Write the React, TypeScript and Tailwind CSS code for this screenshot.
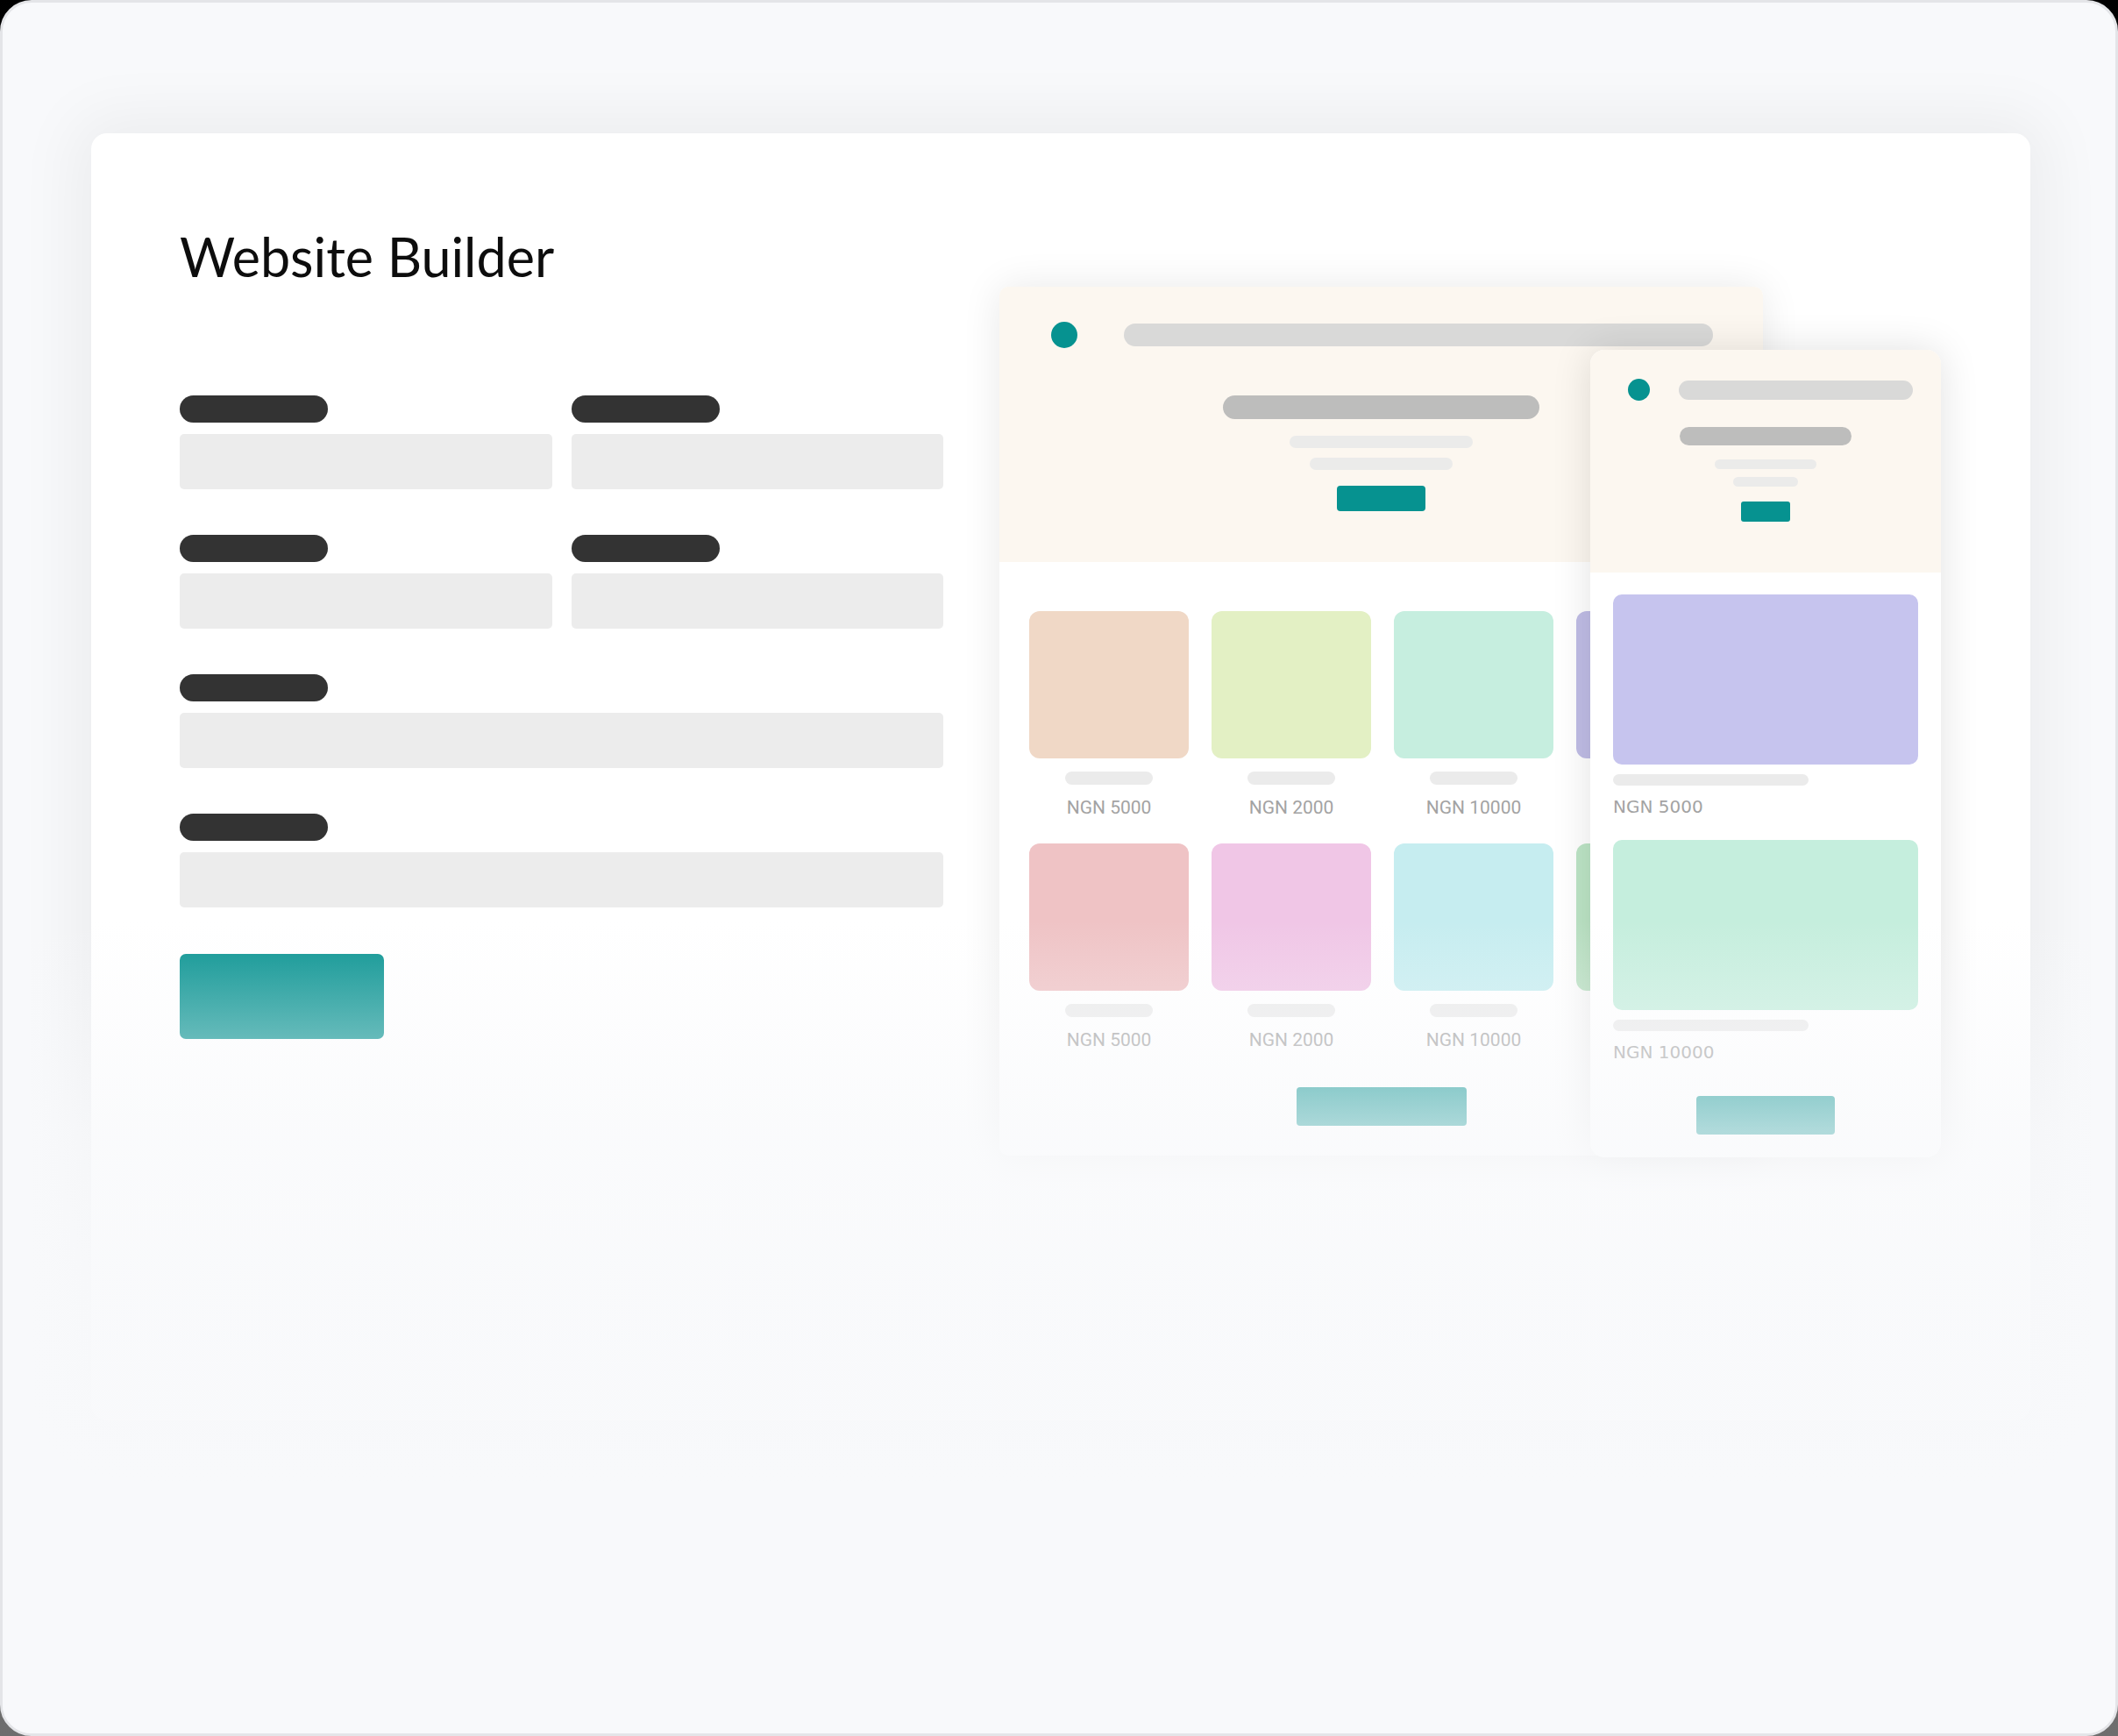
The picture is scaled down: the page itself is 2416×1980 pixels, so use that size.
const deskRow1 = [
  { c: "bg-[#f0d8c6]", p: "NGN 5000" },
  { c: "bg-[#e3f0c4]", p: "NGN 2000" },
  { c: "bg-[#c6eedf]", p: "NGN 10000" },
  { c: "bg-[#c0bde6]", p: "" },
];
const deskRow2 = [
  { c: "bg-[#efc3c5]", p: "NGN 5000" },
  { c: "bg-[#f0c6e6]", p: "NGN 2000" },
  { c: "bg-[#c6edf0]", p: "NGN 10000" },
  { c: "bg-[#bde5c6]", p: "" },
];

function DeskItem({ c, p }: { c: string; p: string }) {
  return (
    <div className="flex flex-col items-center">
      <div className={`w-[182px] h-[168px] rounded-[12px] ${c}`} />
      <div className="mt-[15px] w-[100px] h-[15px] rounded-full bg-[#ebebeb]" />
      <div className="mt-[14px] h-[24px] leading-[24px] text-[21px] text-[#a3a3a3] font-['Roboto',sans-serif] whitespace-nowrap">
        {p}
      </div>
    </div>
  );
}

function FormField() {
  return (
    <div className="flex flex-col">
      <div className="w-[169px] h-[31px] rounded-full bg-[#333333]" />
      <div className="mt-[13px] h-[63px] rounded-[5px] bg-[#ececec]" />
    </div>
  );
}

export default function App() {
  return (
    <div className="w-[2416px] h-[1980px] bg-[linear-gradient(to_bottom,#000000,#6e6e6e)]">
      <div className="relative w-full h-full rounded-[36px] border-[3px] border-[#e4e5e8] bg-[#f8f9fb] overflow-hidden pl-[101px] pr-[97px] pt-[149px]">
        {/* white card */}
        <div className="flex h-[1468px] rounded-[18px] bg-white shadow-[0_0_70px_20px_rgba(0,0,0,0.05)] pl-[101px] pt-[111px]">
          {/* left form */}
          <div className="w-[871px] flex flex-col">
            <h1 className="h-[60px] leading-[60px] text-[61px] font-normal text-[#0d0d0d] font-['Lato',sans-serif] whitespace-nowrap">
              Website Builder
            </h1>
            <div className="mt-[128px] grid grid-cols-2 gap-x-[22px] gap-y-[52px]">
              <FormField />
              <FormField />
              <FormField />
              <FormField />
              <div className="col-span-2">
                <FormField />
              </div>
              <div className="col-span-2">
                <FormField />
              </div>
            </div>
            <div className="mt-[53px] w-[233px] h-[97px] rounded-[7px] bg-[#069290]" />
          </div>

          {/* right mockups */}
          <div className="relative ml-[64px] mt-[64px] w-[1074px] self-start">
            {/* desktop mock */}
            <div className="w-[871px] h-[991px] rounded-[10px] bg-white overflow-hidden shadow-[0_0_45px_rgba(0,0,0,0.09)]">
              <div className="h-[314px] bg-[#fcf7f0] pt-[40px]">
                <div className="flex items-center pl-[59px] pr-[57px]">
                  <div className="w-[30px] h-[30px] rounded-full bg-[#069290]" />
                  <div className="ml-[53px] flex-1 h-[26px] rounded-full bg-[#d9d9d8]" />
                </div>
                <div className="flex flex-col items-center">
                  <div className="mt-[54px] w-[361px] h-[27px] rounded-full bg-[#bdbdbc]" />
                  <div className="mt-[19px] w-[209px] h-[14px] rounded-full bg-[#ebebea]" />
                  <div className="mt-[11px] w-[163px] h-[14px] rounded-full bg-[#ebebea]" />
                  <div className="mt-[18px] w-[101px] h-[29px] rounded-[4px] bg-[#069290]" />
                </div>
              </div>
              <div className="grid grid-cols-[repeat(4,182px)] gap-x-[26px] gap-y-[29px] pl-[34px] pt-[56px]">
                {deskRow1.map((it, i) => (
                  <DeskItem key={`a${i}`} c={it.c} p={it.p} />
                ))}
                {deskRow2.map((it, i) => (
                  <DeskItem key={`b${i}`} c={it.c} p={it.p} />
                ))}
              </div>
              <div className="mt-[42px] mx-auto w-[194px] h-[44px] rounded-[4px] bg-[#069290]" />
            </div>

            {/* mobile mock */}
            <div className="absolute left-[674px] top-[72px] w-[400px] h-[921px] rounded-[16px] bg-white overflow-hidden shadow-[0_0_45px_rgba(0,0,0,0.12)]">
              <div className="h-[254px] bg-[#fcf7f0] pt-[33px]">
                <div className="flex items-center pl-[43px] pr-[32px]">
                  <div className="w-[25px] h-[25px] rounded-full bg-[#069290]" />
                  <div className="ml-[33px] flex-1 h-[22px] rounded-full bg-[#d9d9d8]" />
                </div>
                <div className="flex flex-col items-center">
                  <div className="mt-[30px] w-[196px] h-[21px] rounded-full bg-[#bdbdbc]" />
                  <div className="mt-[16px] w-[116px] h-[11px] rounded-full bg-[#ebebea]" />
                  <div className="mt-[9px] w-[74px] h-[11px] rounded-full bg-[#ebebea]" />
                  <div className="mt-[17px] w-[56px] h-[23px] rounded-[3px] bg-[#069290]" />
                </div>
              </div>
              <div className="flex flex-col gap-[26px] px-[26px] pt-[25px]">
                <div className="flex flex-col">
                  <div className="h-[194px] rounded-[10px] bg-[#c6c4ee]" />
                  <div className="mt-[11px] w-[223px] h-[13px] rounded-full bg-[#ebebeb]" />
                  <div className="mt-[12px] h-[24px] leading-[24px] text-[20px] text-[#a3a3a3] font-['DejaVu_Sans',sans-serif] whitespace-nowrap">
                    NGN 5000
                  </div>
                </div>
                <div className="flex flex-col">
                  <div className="h-[194px] rounded-[10px] bg-[#c5eedd]" />
                  <div className="mt-[11px] w-[223px] h-[13px] rounded-full bg-[#ebebeb]" />
                  <div className="mt-[12px] h-[24px] leading-[24px] text-[20px] text-[#a3a3a3] font-['DejaVu_Sans',sans-serif] whitespace-nowrap">
                    NGN 10000
                  </div>
                </div>
              </div>
              <div className="mt-[38px] mx-auto w-[158px] h-[44px] rounded-[4px] bg-[#069290]" />
            </div>
          </div>
        </div>

        {/* bottom fade */}
        <div className="pointer-events-none absolute left-0 right-0 top-[1047px] h-[930px] bg-[linear-gradient(to_bottom,rgba(248,249,251,0)_0px,rgba(248,249,251,0.7)_240px,rgba(248,249,251,0.88)_400px,rgba(248,249,251,0.94)_580px,rgba(248,249,251,1)_700px)]" />
      </div>
    </div>
  );
}
